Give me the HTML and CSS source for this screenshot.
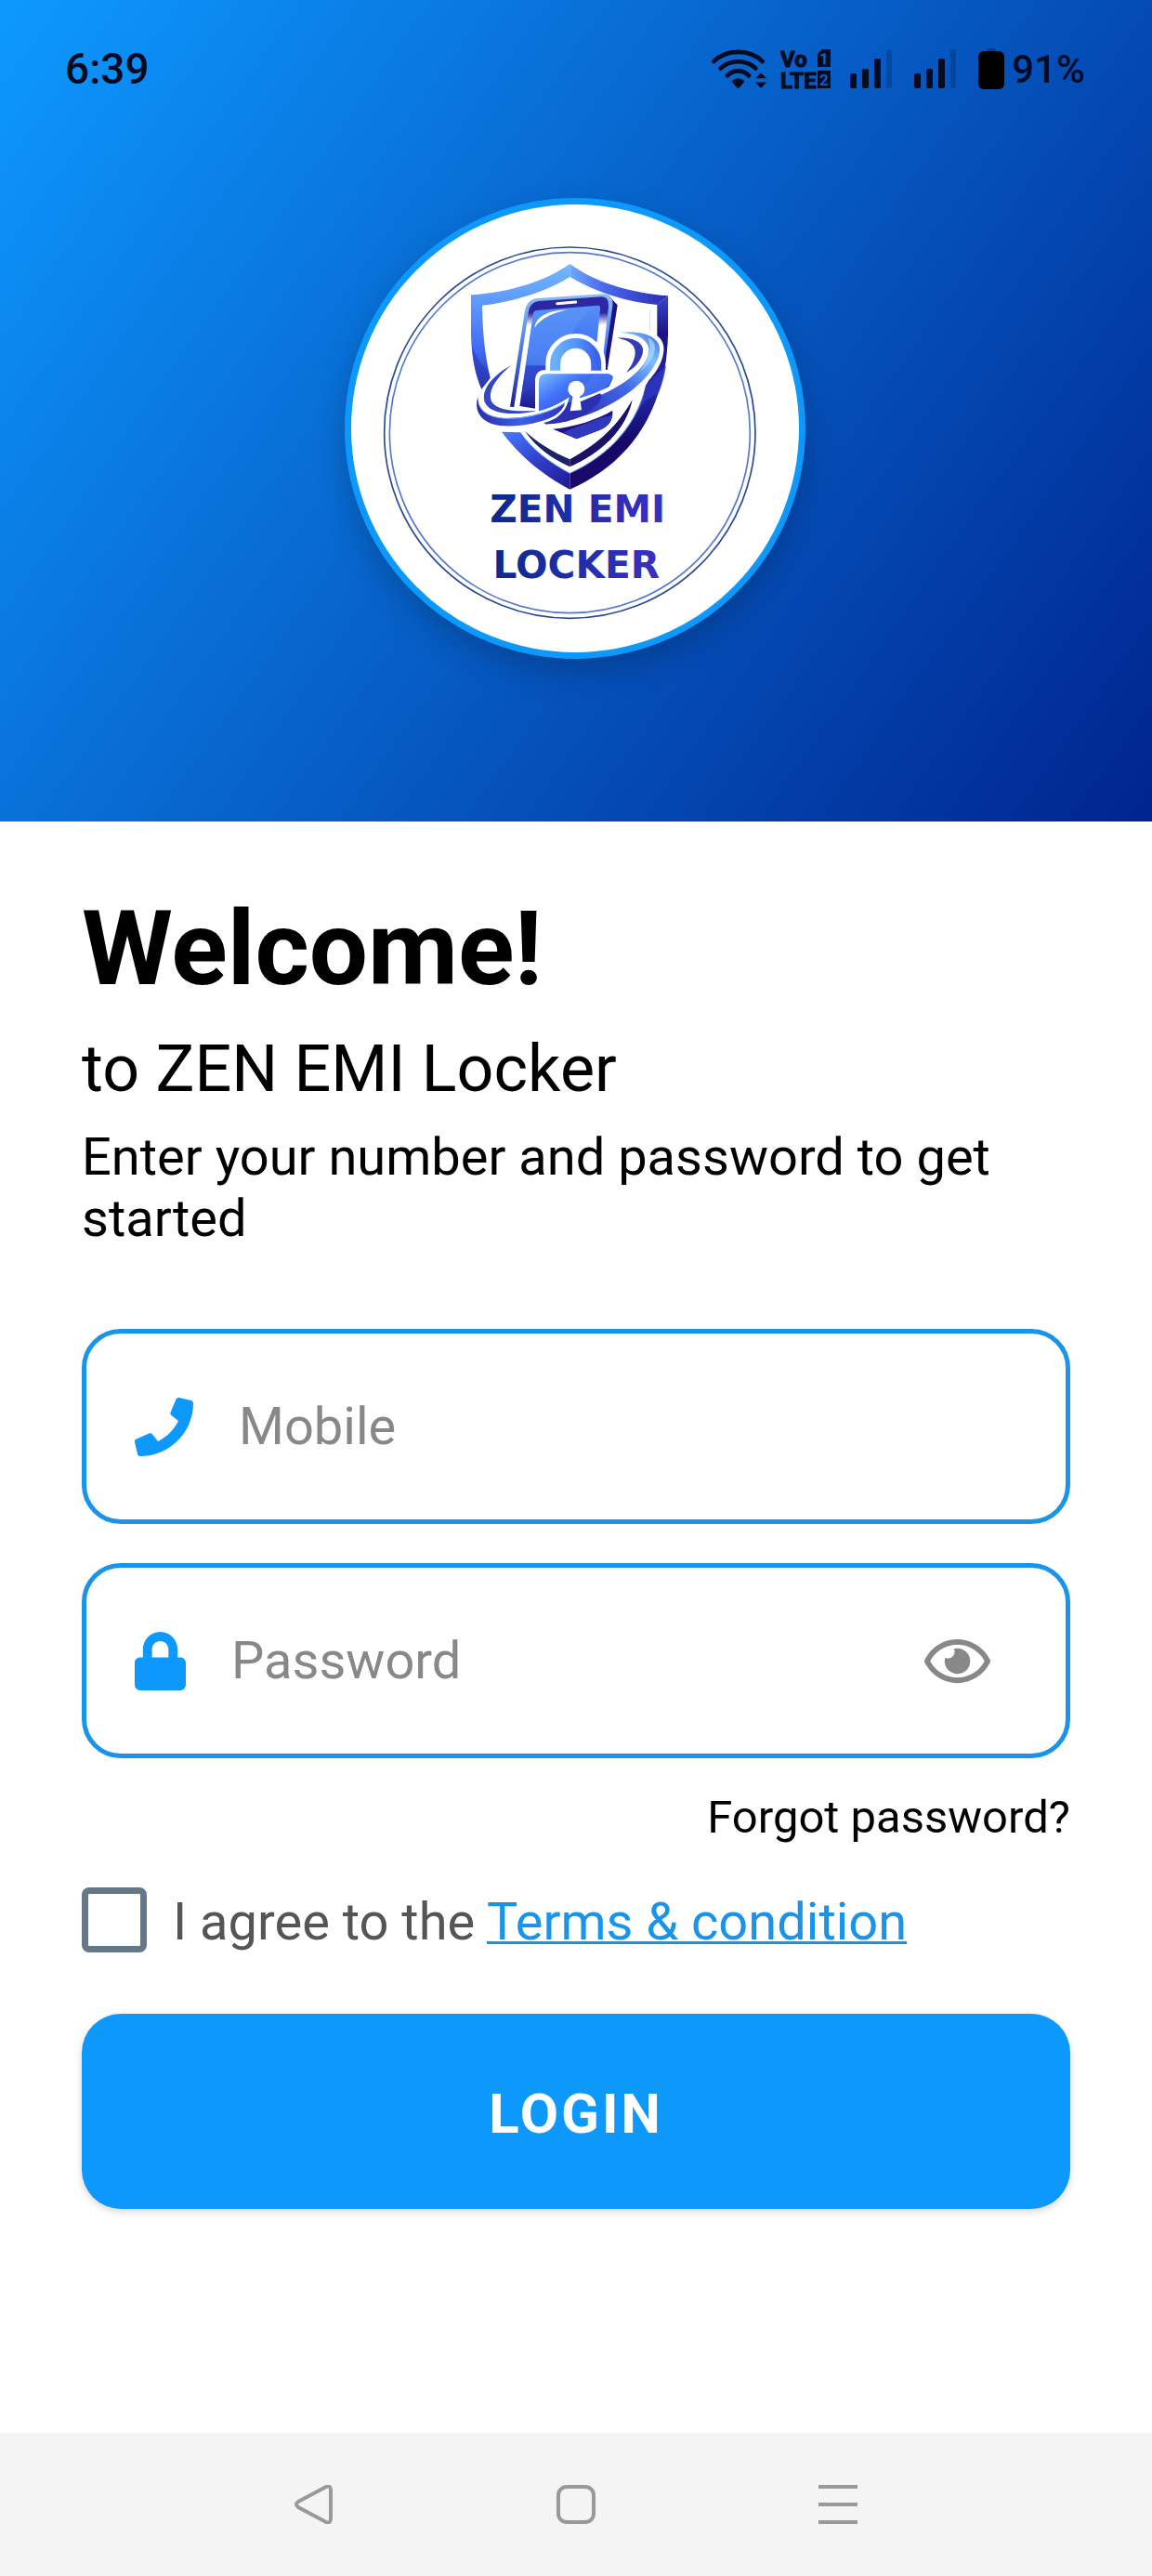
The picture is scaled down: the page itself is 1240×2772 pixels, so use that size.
FILE: index.html
```html
<!DOCTYPE html>
<html lang="en">
<head>
    <meta charset="UTF-8">
    <meta name="viewport" content="width=device-width, initial-scale=1.0">
    <title>ZEN EMI Locker</title>
    <link rel="stylesheet" href="styles.css">
</head>

<body>
    <header class="hero">
        <div class="status-bar">
            <span class="time">6:39</span>
            <div class="status-icons">
                <svg class="wifi" viewBox="80 67 178 126">
                    <g fill="none" stroke="#020b1f" stroke-width="14" stroke-linecap="round">
                        <path d="M87 106C128 65 204 65 245 106"/>
                        <path d="M109 129C138 99 194 99 223 129"/>
                        <path d="M131 152C150 132 182 132 201 152"/>
                    </g>
                    <path fill="#020b1f" d="M147 174Q144 170 149 167Q166 155 183 167Q188 170 185 174L170 191Q166 195 162 191Z"/>
                    <path fill="#020b1f" d="M222 161L240 143L258 161ZM222 174H258L240 193Z"/>
                </svg>
                <svg class="volte" viewBox="0 0 54 56">
                    <text class="volte-text" x="0" y="26">Vo</text>
                    <text class="volte-text" x="0" y="49">LTE</text>
                    <path fill="#020b1f" d="M45 7H54V26H40V12ZM40 30H54V49H40Z"/>
                    <text class="sim-text" x="47" y="23">1</text>
                    <text class="sim-text" x="47" y="46">2</text>
                </svg>
                <svg class="signal" viewBox="0 0 45 42">
                    <g fill="#020b1f">
                        <rect x="0" y="26" width="7" height="16" rx="2"/>
                        <rect x="13" y="21" width="7" height="21" rx="2"/>
                        <rect x="26" y="10" width="7" height="32" rx="2"/>
                        <rect x="39" y="0" width="6" height="42" rx="2" opacity=".2"/>
                    </g>
                </svg>
                <svg class="signal" viewBox="0 0 45 42">
                    <g fill="#020b1f">
                        <rect x="0" y="26" width="7" height="16" rx="2"/>
                        <rect x="13" y="21" width="7" height="21" rx="2"/>
                        <rect x="26" y="10" width="7" height="32" rx="2"/>
                        <rect x="39" y="0" width="6" height="42" rx="2" opacity=".2"/>
                    </g>
                </svg>
                <svg class="battery" viewBox="0 0 28 44">
                    <rect x="9" y="0" width="10" height="8" rx="3" fill="#020b1f" opacity=".3"/>
                    <rect x="0" y="3" width="28" height="41" rx="6"/>
                </svg>
                <span class="percent">91%</span>
            </div>
        </div>

        <div class="logo">
            <svg viewBox="57 60 1446 1446" role="img" aria-label="ZEN EMI Locker">
                <defs>
                    <linearGradient id="leftSide" x1="0" y1="0" x2="0" y2="1">
                        <stop offset="0" stop-color="#74b8ff"/>
                        <stop offset=".35" stop-color="#5a94fb"/>
                        <stop offset=".7" stop-color="#4068f2"/>
                        <stop offset="1" stop-color="#2a34b4"/>
                    </linearGradient>
                    <linearGradient id="topSide">
                        <stop offset="0" stop-color="#6fa9fa"/>
                        <stop offset=".35" stop-color="#4a68ec"/>
                        <stop offset="1" stop-color="#2a2cb2"/>
                    </linearGradient>
                    <linearGradient id="rightSide" x1="0" y1="0" x2="0" y2="1">
                        <stop offset="0" stop-color="#3a46cc"/>
                        <stop offset=".2" stop-color="#1c1184"/>
                        <stop offset=".5" stop-color="#2427a4"/>
                        <stop offset=".75" stop-color="#150868"/>
                        <stop offset="1" stop-color="#1d0a68"/>
                    </linearGradient>
                    <linearGradient id="bottomSide" x1="0" y1="0" x2="1" y2="1">
                        <stop offset="0" stop-color="#4a7cff"/>
                        <stop offset=".5" stop-color="#3040cc"/>
                        <stop offset="1" stop-color="#1f1790"/>
                    </linearGradient>
                    <linearGradient id="bezel" x1="0" y1="0" x2="0" y2="1">
                        <stop offset="0" stop-color="#2c27a4"/>
                        <stop offset=".14" stop-color="#2c27a4"/>
                        <stop offset=".25" stop-color="#fff"/>
                        <stop offset="1" stop-color="#fff"/>
                    </linearGradient>
                    <linearGradient id="phoneEdge" x1="0" y1="0" x2="0" y2="1">
                        <stop offset="0" stop-color="#8dbdf6"/>
                        <stop offset=".5" stop-color="#4a78e6"/>
                        <stop offset="1" stop-color="#221c92"/>
                    </linearGradient>
                    <linearGradient id="screen" x1="0" y1="0" x2="0" y2="1">
                        <stop offset="0" stop-color="#5590f6"/>
                        <stop offset=".4" stop-color="#4170f8"/>
                        <stop offset=".7" stop-color="#3048d2"/>
                        <stop offset="1" stop-color="#1f148a"/>
                    </linearGradient>
                    <linearGradient id="padlock" x1="0" y1="0" x2="1" y2="1">
                        <stop offset="0" stop-color="#79bdff"/>
                        <stop offset=".3" stop-color="#4374fa"/>
                        <stop offset="1" stop-color="#2420a0"/>
                    </linearGradient>
                    <linearGradient id="shackle">
                        <stop offset="0" stop-color="#68b0fb"/>
                        <stop offset=".5" stop-color="#5594fb"/>
                        <stop offset="1" stop-color="#3964e8"/>
                    </linearGradient>
                    <linearGradient id="ringRight" x1="1" y1="0" x2="0" y2="1">
                        <stop offset="0" stop-color="#3f63dc"/>
                        <stop offset=".2" stop-color="#7fc0fb"/>
                        <stop offset=".5" stop-color="#4169e8"/>
                        <stop offset="1" stop-color="#2b2db4"/>
                    </linearGradient>
                    <linearGradient id="ringLeft">
                        <stop offset="0" stop-color="#2c2ba6"/>
                        <stop offset=".5" stop-color="#3b5fe6"/>
                        <stop offset="1" stop-color="#2b35bb"/>
                    </linearGradient>
                    <linearGradient id="wordmark">
                        <stop offset="0" stop-color="#0b2a8c"/>
                        <stop offset="1" stop-color="#3a30c4"/>
                    </linearGradient>
                </defs>

                <circle cx="763" cy="797" r="599" fill="none" stroke="#2b4a8e" stroke-width="5"/>
                <circle cx="763" cy="797" r="582" fill="none" stroke="#5478cc" stroke-width="5"/>

                <g transform="translate(360 180)">
                    <!-- shield -->
                    <path fill="url(#leftSide)" d="M403 72C330 125 210 165 84 172V300C86 370 98 430 118 476L146 440C128 360 122 300 120 206C220 195 330 160 403 114Z"/>
                    <path fill="#2a38b8" opacity=".6" d="M86 330C95 370 120 400 140 416L146 440L118 476C98 430 88 380 86 330Z"/>
                    <path fill="url(#rightSide)" d="M720 175V300C718 380 705 450 685 500C640 630 550 735 403 800V748C530 690 620 590 648 465L685 400V204Z"/>
                    <path fill="#2c38c0" opacity=".8" d="M650 462L714 400C708 440 698 470 688 492C660 500 640 520 622 548C636 515 644 490 650 462Z"/>
                    <path fill="url(#topSide)" d="M403 72C490 135 600 165 720 175L685 204C590 195 490 165 403 114Z"/>
                    <path fill="url(#bottomSide)" d="M183 614L243 616C280 670 340 715 403 748V800C310 750 240 690 183 614Z"/>
                    <path fill="none" stroke="#5b9af0" stroke-width="3" d="M243 616C280 670 340 715 403 748C530 690 610 600 642 490"/>
                    <path fill="#1b2468" d="M258 612C300 650 350 680 403 703V727C345 700 295 665 258 612Z"/>
                    <path fill="#1a1266" d="M403 703C500 650 560 590 605 510C585 610 500 685 403 727Z"/>
                    <path d="M662 220V290" stroke="#c5cbe6" stroke-width="2"/>

                    <!-- phone -->
                    <path fill="#1d1184" d="M525 171L557 205L520 440L490 430Z"/>
                    <path fill="#1d1284" d="M348 605C420 598 490 575 541 545C543 575 530 595 500 608L425 637Z"/>
                    <path fill="#3038bc" d="M380 616L500 570L541 560C536 585 525 597 500 608L425 637Z"/>
                    <path fill="url(#phoneEdge)" d="M257 230Q262 188 297 183L508 169Q546 168 541 210L510 430L300 540L210 533Z"/>
                    <path fill="url(#bezel)" d="M269 230Q273 196 302 192L505 178Q530 177 528 210L505 420L300 545L222 540Z"/>
                    <path fill="url(#screen)" d="M285 232Q287 223 297 222L494 206Q503 206 501 218L480 430L330 545L241 531Z"/>
                    <path fill="#5b98f8" opacity=".5" d="M470 209L400 310L330 400L262 400L284 240Q287 224 300 222Z"/>
                    <path fill="#2d40c8" opacity=".5" d="M262 400L330 400L270 480L246 500Z"/>
                    <path fill="#fff" d="M289 278C295 240 335 222 396 220C345 232 312 246 289 278Z"/>
                    <path stroke="#fff" stroke-width="9" stroke-linecap="round" d="M362 200L422 195"/>

                    <!-- back of the ring -->
                    <path fill="#3347c4" stroke="#fff" stroke-width="12" paint-order="stroke" d="M215 398C140 440 112 490 132 525C155 562 240 560 298 545C230 551 165 545 150 515C138 480 165 440 215 398Z"/>
                    <path fill="#323cb4" d="M558 311C620 308 655 335 633 375C620 400 605 412 585 423C605 400 622 365 610 340C600 322 580 317 558 311Z"/>

                    <!-- padlock -->
                    <path fill="none" stroke="#fff" stroke-width="62" d="M356 430V394A66 66 0 0 1 488 394V430"/>
                    <path fill="#fff" d="M291 570V450Q291 414 325 414H535Q560 418 556 445L450 560L330 600Z"/>
                    <path fill="#fff" d="M373 420V394A49 49 0 0 1 471 394V420Z"/>
                    <path fill="none" stroke="url(#shackle)" stroke-width="33" d="M356 416V394A66 66 0 0 1 488 394V416"/>
                    <path fill="url(#padlock)" d="M303 452Q303 427 328 427H526Q548 431 540 446C520 490 500 540 440 566L325 590L303 545Z"/>
                    <path fill="#4b80fb" opacity=".55" d="M480 427H526Q548 431 540 446C520 475 480 500 445 514L436 480Z"/>

                    <!-- front of the ring -->
                    <path fill="url(#ringRight)" stroke="#fff" stroke-width="26" paint-order="stroke" d="M558 294C645 284 699 310 693 355C682 435 560 535 410 575L440 517C560 485 662 405 658 348C655 312 610 293 558 294Z"/>
                    <path fill="#2b2fb2" d="M303 560L388 520L441 515L500 490C520 500 480 555 410 575C380 585 345 590 322 588Z"/>
                    <path fill="#a8dcff" opacity=".7" d="M655 310C692 325 685 375 630 420C660 375 670 345 655 310Z"/>
                    <path fill="url(#ringLeft)" stroke="#fff" stroke-width="16" paint-order="stroke" d="M106 500C105 545 140 568 200 570C270 570 340 550 388 520C382 540 372 550 355 562C300 592 200 605 150 588C110 572 94 540 106 500Z"/>
                    <path fill="none" stroke="#7db4f8" stroke-width="3" d="M108 522C120 556 150 569 200 571C270 571 340 551 386 522"/>
                    <path fill="#fff" d="M413 499L404 547L441 544L435 499Z"/>
                    <circle cx="424" cy="476" r="27" fill="#fff"/>
                </g>

                <text class="wordmark" x="788" y="1086">ZEN EMI</text>
                <text class="wordmark" x="784" y="1265">LOCKER</text>
            </svg>
        </div>
    </header>

    <main class="content">
        <h1>Welcome!</h1>
        <h2>to ZEN EMI Locker</h2>
        <p class="intro">Enter your number and password to get started</p>

        <form>
            <div class="field">
                <label for="mobile" aria-label="Mobile">
                    <svg class="phone-icon" viewBox="0 0 512 512"><path d="M493.4 24.6l-104-24c-11.3-2.6-22.9 3.3-27.5 13.9l-48 112c-4.2 9.8-1.4 21.3 6.9 28l60.6 49.6c-36 76.7-98.9 140.5-177.2 177.2l-49.6-60.6c-6.8-8.3-18.2-11.1-28-6.9l-112 48C3.9 366.5-2 378.1.6 389.4l24 104C27.1 504.2 36.7 512 48 512c256.1 0 464-207.5 464-464 0-11.2-7.7-20.9-18.6-23.4z"/></svg>
                </label>
                <input type="tel" id="mobile" placeholder="Mobile">
            </div>
            <div class="field">
                <label for="password" aria-label="Password">
                    <svg class="lock-icon" viewBox="0 0 448 512"><path d="M400 224h-24v-72C376 68.2 307.8 0 224 0S72 68.2 72 152v72H48c-26.5 0-48 21.5-48 48v192c0 26.5 21.5 48 48 48h352c26.5 0 48-21.5 48-48V272c0-26.5-21.5-48-48-48zm-104 0H152v-72c0-39.7 32.3-72 72-72s72 32.3 72 72v72z"/></svg>
                </label>
                <input type="password" id="password" placeholder="Password">
                <button type="button" class="show-password" aria-label="Show password">
                    <svg viewBox="0 0 576 512"><path d="M288 144a110.94 110.94 0 0 0-31.24 5 55.4 55.4 0 0 1 7.24 27 56 56 0 0 1-56 56 55.4 55.4 0 0 1-27-7.24A111.71 111.71 0 1 0 288 144zm284.52 97.4C518.29 135.59 410.93 64 288 64S57.68 135.64 3.48 241.41a32.35 32.35 0 0 0 0 29.19C57.71 376.41 165.07 448 288 448s230.32-71.64 284.52-177.41a32.35 32.35 0 0 0 0-29.19zM288 400c-98.65 0-189.09-55-237.93-144C98.91 167 189.34 112 288 112s189.09 55 237.93 144C477.1 345 386.66 400 288 400z"/></svg>
                </button>
            </div>
            <a class="forgot" href="#">Forgot password?</a>
            <div class="agree">
                <input type="checkbox" id="agree">
                <label for="agree">I agree to the <a href="#">Terms &amp; condition</a></label>
            </div>
            <button type="submit" class="login">LOGIN</button>
        </form>
    </main>

    <nav class="nav-bar">
        <button aria-label="Back">
            <svg viewBox="0 0 42 42"><path d="M34 2Q39 0 39 6V36Q39 42 34 40L4 24Q0 21 4 18Z"/></svg>
        </button>
        <button aria-label="Home">
            <svg viewBox="0 0 42 42"><rect x="2" y="2" width="38" height="38" rx="9"/></svg>
        </button>
        <button aria-label="Recent apps">
            <svg viewBox="0 0 42 42"><path d="M0 2H42M0 21H42M0 40H42"/></svg>
        </button>
    </nav>
</body>
</html>
```

FILE: styles.css
```css
* {
    box-sizing: border-box;
}

body {
    margin: 0;
    min-height: 100vh;
    display: flex;
    flex-direction: column;
    font-family: Roboto, sans-serif;
    background-color: #fff;
    color: #000;
}

svg {
    display: block;
}

button {
    padding: 0;
    border: none;
    background: none;
    font-family: inherit;
    cursor: pointer;
}

/* header */
.hero {
    padding: 46px 72px 175px 70px;
    background: linear-gradient(125deg, #0d99ff, #00248f);
}

.status-bar {
    display: flex;
    justify-content: space-between;
    align-items: center;
    height: 56px;
    color: #020b1f;
}

.time {
    font-size: 46px;
    font-weight: 500;
}

.status-icons {
    display: flex;
    align-items: center;
}

.wifi {
    width: 59px;
    height: 42px;
    margin-right: 15px;
}

.volte {
    width: 54px;
    height: 56px;
    margin-right: 21px;
}

.volte-text {
    font-size: 24px;
    font-weight: 700;
    fill: #020b1f;
    stroke: #020b1f;
}

.sim-text {
    font-size: 17px;
    font-weight: 700;
    fill: #0860c6;
    text-anchor: middle;
}

.signal {
    width: 45px;
    height: 42px;
    margin-right: 24px;
}

.battery {
    width: 28px;
    height: 44px;
    margin-right: 8px;
}

.percent {
    font-size: 42px;
    font-weight: 500;
}

.logo {
    width: 496px;
    height: 496px;
    margin: 111px auto 0;
    border: 7px solid #0d99fb;
    border-radius: 50%;
    background-color: #fff;
    box-shadow: 0 14px 35px rgba(0, 0, 0, 0.2);
}

.wordmark {
    font-family: 'DejaVu Sans', sans-serif;
    font-size: 122px;
    font-weight: bold;
    text-anchor: middle;
    fill: url(#wordmark);
}

/* login form */
.content {
    flex: 1;
    padding: 71px 88px;
}

h1 {
    margin: 0 0 23px;
    font-size: 112px;
    line-height: 131px;
}

h2 {
    margin: 0 0 21px;
    font-size: 70px;
    font-weight: 400;
    line-height: 82px;
}

.intro {
    margin: 0 0 86px;
    font-size: 56px;
    line-height: 66px;
}

form {
    display: flex;
    flex-direction: column;
}

.field {
    display: flex;
    align-items: center;
    gap: 49px;
    height: 210px;
    margin-bottom: 42px;
    padding: 0 81px 0 52px;
    border: 5px solid #1a94ea;
    border-radius: 42px;
}

.field input {
    flex: 1;
    min-width: 0;
    padding: 0;
    border: none;
    outline: none;
    background: none;
    font-family: inherit;
    font-size: 56px;
}

.field input::placeholder {
    color: #888;
}

.phone-icon {
    width: 63px;
    height: 63px;
    fill: #0d99fb;
}

.lock-icon {
    width: 55px;
    height: 63px;
    fill: #0d99fb;
}

.show-password svg {
    width: 71px;
    height: 63px;
    fill: #888;
}

.forgot {
    align-self: flex-end;
    margin-top: -7px;
    margin-bottom: 47px;
    font-size: 49px;
    line-height: 57px;
    color: #000;
    text-decoration: none;
}

.agree {
    display: flex;
    align-items: flex-end;
    gap: 28px;
    margin-bottom: 66px;
    font-size: 56px;
    line-height: 66px;
    color: #555;
}

.agree input {
    appearance: none;
    width: 70px;
    height: 70px;
    margin: 0;
    border: 7px solid #667788;
    border-radius: 8px;
}

.agree input:checked {
    background-color: #0d99fb;
}

.agree a {
    color: #1a94ea;
    text-decoration-thickness: 3px;
}

.login {
    height: 210px;
    padding-top: 4px;
    border-radius: 42px;
    background-color: #0d99fb;
    color: #fff;
    font-size: 60px;
    font-weight: 700;
    letter-spacing: 3px;
    box-shadow: 0 3px 8px rgba(0, 0, 0, 0.16);
}

/* system navigation */
.nav-bar {
    display: flex;
    justify-content: center;
    align-items: center;
    gap: 240px;
    height: 154px;
    background-color: #f4f4f4;
}

.nav-bar svg {
    width: 42px;
    height: 42px;
    fill: none;
    stroke: #999;
    stroke-width: 4;
}
```
